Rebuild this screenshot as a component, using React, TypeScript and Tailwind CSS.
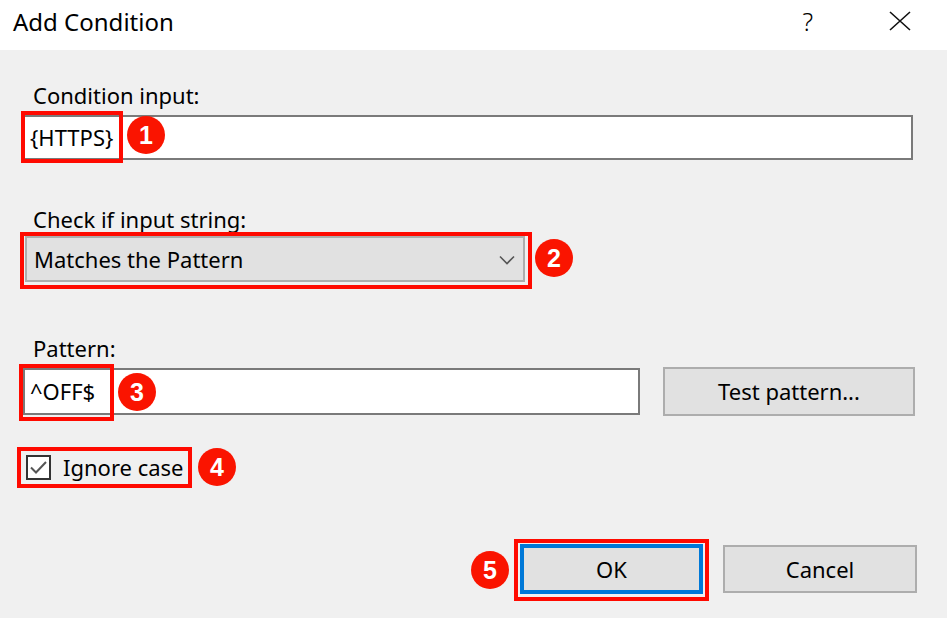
import React from "react";

const font = { fontFamily: '"Noto Sans", "Open Sans", sans-serif' };

function Badge({ n, className }: { n: number; className: string }) {
  return (
    <div
      className={`absolute w-[38px] h-[38px] rounded-full bg-[#fa1400] text-white flex items-center justify-center text-[25px] font-bold leading-none ${className}`}
      style={{ fontFamily: '"Liberation Sans", Arial, sans-serif' }}
    >
      {n}
    </div>
  );
}

export default function App() {
  return (
    <div className="w-[947px] h-[618px] flex flex-col text-black overflow-hidden" style={font}>
      {/* Title bar */}
      <div className="h-[50px] bg-white flex items-center shrink-0">
        <div className="ml-[13px] text-[24px] leading-none mb-[7px]">Add Condition</div>
        <div className="ml-auto mr-[76px] text-[25px] leading-none mb-[7px] font-light">?</div>
        <svg width="22" height="20" viewBox="0 0 22 20" className="mr-[36px] mb-[8px]">
          <path d="M1 1 L21 19 M21 1 L1 19" stroke="#111" strokeWidth="1.6" fill="none" />
        </svg>
      </div>

      {/* Body */}
      <div className="flex-1 bg-[#f0f0f0] flex flex-col pl-[23px]">
        <div className="mt-[30px] text-[22px] leading-[30px] ml-[10px]">Condition input:</div>

        {/* Input 1 */}
        <div className="relative mt-[5px] w-[890px] h-[45px] bg-white border-2 border-[#7a7a7a] flex items-center pl-[5px] text-[22px]">
          <span>{"{HTTPS}"}</span>
          <div className="absolute left-[-4px] top-[-6px] w-[102px] h-[52px] border-4 border-[#ff0a00]" />
          <Badge n={1} className="left-[102px] top-[-1px]" />
        </div>

        <div className="mt-[44px] text-[22px] leading-[30px] ml-[10px]">Check if input string:</div>

        {/* Dropdown */}
        <div className="relative mt-[2px] ml-[2px] w-[500px] h-[46px] bg-[#e1e1e1] border-2 border-[#adadad] flex items-center pl-[7px] pr-[8px] text-[22px]">
          <span>Matches the Pattern</span>
          <svg width="16" height="10" viewBox="0 0 16 10" className="ml-auto mt-[2px]">
            <path d="M1 1.5 L8 8.5 L15 1.5" stroke="#555" strokeWidth="1.6" fill="none" />
          </svg>
          <div className="absolute left-[-7px] top-[-6px] w-[512px] h-[57px] border-4 border-[#ff0a00]" />
          <Badge n={2} className="left-[508px] top-[1px]" />
        </div>

        <div className="mt-[51px] text-[22px] leading-[30px] ml-[10px]">Pattern:</div>

        {/* Pattern row */}
        <div className="mt-[4px] flex items-center gap-[23px] h-[49px]">
          <div className="relative w-[617px] h-[47px] bg-white border-2 border-[#7a7a7a] flex items-center pl-[5px] text-[22px]">
            <span>^OFF$</span>
            <div className="absolute left-[-6px] top-[-6px] w-[95px] h-[57px] border-4 border-[#ff0a00]" />
            <Badge n={3} className="left-[93px] top-[3px]" />
          </div>
          <div className="w-[252px] h-[49px] bg-[#e1e1e1] border-2 border-[#adadad] flex items-center justify-center text-[22px]">
            Test pattern...
          </div>
        </div>

        {/* Checkbox row */}
        <div className="relative mt-[31px] h-[41px] w-[175px] ml-[-6px] flex items-center">
          <div className="ml-[9px] w-[25px] h-[25px] border-2 border-[#333] bg-white flex items-center justify-center">
            <svg width="19" height="15" viewBox="0 0 19 15">
              <path d="M2 7.5 L7 12.5 L17 2" stroke="#555" strokeWidth="2" fill="none" />
            </svg>
          </div>
          <span className="ml-[12px] text-[22px]">Ignore case</span>
          <div className="absolute inset-0 border-4 border-[#ff0a00]" />
          <Badge n={4} className="left-[181px] top-[1px]" />
        </div>

        {/* Buttons */}
        <div className="mt-[56px] flex items-center justify-end gap-[20px] pr-[30px]">
          <div className="relative w-[183px] h-[50px] bg-[#e1e1e1] border-4 border-[#0078d7] flex items-center justify-center text-[22px]">
            OK
            <div className="absolute left-[-10px] top-[-9px] w-[195px] h-[62px] border-4 border-[#ff0a00]" />
            <Badge n={5} className="left-[-53px] top-[3px]" />
          </div>
          <div className="w-[194px] h-[48px] bg-[#e1e1e1] border-2 border-[#adadad] flex items-center justify-center text-[22px]">
            Cancel
          </div>
        </div>
      </div>
    </div>
  );
}
